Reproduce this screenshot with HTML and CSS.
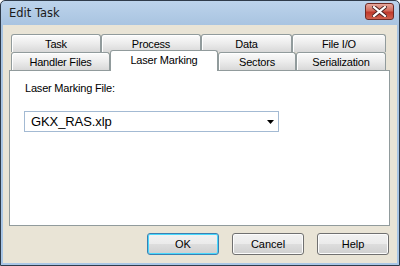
FILE: index.html
```html
<!DOCTYPE html>
<html lang="en">
<head>
<meta charset="UTF-8">
<title>Edit Task</title>
<link rel="stylesheet" href="styles.css">
</head>
<body>
<div class="window">
<div class="titlebar">
<span class="title">Edit Task</span>
<div class="close">
<svg width="15" height="11" viewBox="0 0 15 11"><path d="M2 1 L13 10 M13 1 L2 10" stroke="#4a2020" stroke-width="4" stroke-linecap="square"/><path d="M2 1 L13 10 M13 1 L2 10" stroke="#fff" stroke-width="2.2" stroke-linecap="square"/></svg>
</div>
</div>
<div class="client">
<div class="tabs">
<div class="tab-row row-back">
<div class="tab">Task</div>
<div class="tab">Process</div>
<div class="tab">Data</div>
<div class="tab">File I/O</div>
</div>
<div class="tab-row row-front">
<div class="tab">Handler Files</div>
<div class="tab selected">Laser Marking</div>
<div class="tab">Sectors</div>
<div class="tab">Serialization</div>
</div>
</div>
<div class="panel">
<div class="field-label">Laser Marking File:</div>
<div class="combo">
<span class="combo-text">GKX_RAS.xlp</span>
<svg class="arrow" width="7" height="4" viewBox="0 0 7 4"><polygon points="0,0 7,0 3.5,4" fill="#000"/></svg>
</div>
</div>
<div class="buttons">
<div class="btn default">OK</div>
<div class="btn">Cancel</div>
<div class="btn">Help</div>
</div>
</div>
</div>
</body>
</html>
```
FILE: styles.css
```css
body {
    margin: 0;
    font-family: "Liberation Sans", Arial, sans-serif;
    font-size: 11px;
    color: #000;
}
.window {
    width: 400px;
    height: 266px;
    box-sizing: border-box;
    border: 1px solid #2f3b4a;
    border-radius: 5px 5px 0 0;
    background: linear-gradient(#bcd3eb 0px, #a9c4e1 24px, #a9c6e6 100%);
    padding: 0 2px 2px 2px;
    display: flex;
    flex-direction: column;
}
.titlebar {
    height: 24px;
    display: flex;
    align-items: center;
    justify-content: space-between;
    padding: 0 3px 0 6px;
}
.title {
    font-family: "DejaVu Sans", sans-serif;
    font-size: 11.5px;
    color: #1a1a1a;
    margin-top: -1px;
}
.close {
    width: 27px;
    height: 15px;
    margin-top: -3px;
    border: 1px solid #6e2a24;
    border-radius: 3px;
    background: linear-gradient(#e6a89d 0%, #d26a5a 45%, #c0392b 55%, #d0624f 100%);
    display: flex;
    align-items: center;
    justify-content: center;
}
.client {
    flex: 1;
    background: #e9e4d6;
    padding: 9px 7px 0 6px;
    display: flex;
    flex-direction: column;
}
.tabs {
    padding-left: 2px;
}
.tab-row {
    display: grid;
    height: 18px;
}
.row-back {
    grid-template-columns: 90px 100px 91px 94px;
}
.row-front {
    grid-template-columns: 99px 108px 78px 90px;
}
.tab {
    box-sizing: border-box;
    border: 1px solid #919b9c;
    border-bottom: none;
    border-radius: 3px 3px 0 0;
    background: linear-gradient(#fbfbfb 0%, #ececec 50%, #d8d8d8 100%);
    box-shadow: inset 1px 1px 0 #fff;
    display: flex;
    align-items: center;
    justify-content: center;
    padding-top: 1px;
    letter-spacing: -0.2px;
}
.tab.selected {
    position: relative;
    z-index: 2;
    margin-top: -2px;
    margin-bottom: -1px;
    background: #fff;
    box-shadow: none;
    align-items: flex-start;
    padding-top: 3px;
}
.panel {
    height: 156px;
    box-sizing: border-box;
    background: #fff;
    border: 1px solid #919b9c;
    padding: 11px 0 0 15px;
}
.field-label {
    line-height: 13px;
    letter-spacing: -0.2px;
}
.combo {
    margin-top: 16px;
    margin-left: -1px;
    width: 255px;
    height: 21px;
    box-sizing: border-box;
    border: 1px solid #a3bad3;
    display: flex;
    align-items: center;
    justify-content: space-between;
    padding: 0 4px 0 6px;
}
.combo-text {
    font-size: 13px;
    letter-spacing: -0.1px;
}
.buttons {
    margin-top: 7px;
    padding-right: 1px;
    display: flex;
    justify-content: flex-end;
    gap: 13px;
}
.btn {
    width: 72px;
    height: 22px;
    box-sizing: border-box;
    border: 1px solid #707070;
    border-radius: 3px;
    background: linear-gradient(#f2f2f2 0%, #ebebeb 48%, #dddddd 52%, #cfcfcf 100%);
    box-shadow: inset 0 0 0 1px #fcfcfc;
    display: flex;
    align-items: center;
    justify-content: center;
}
.btn.default {
    border-color: #3c7fb1;
    box-shadow: inset 0 0 0 1px #48d8fd;
}
```
